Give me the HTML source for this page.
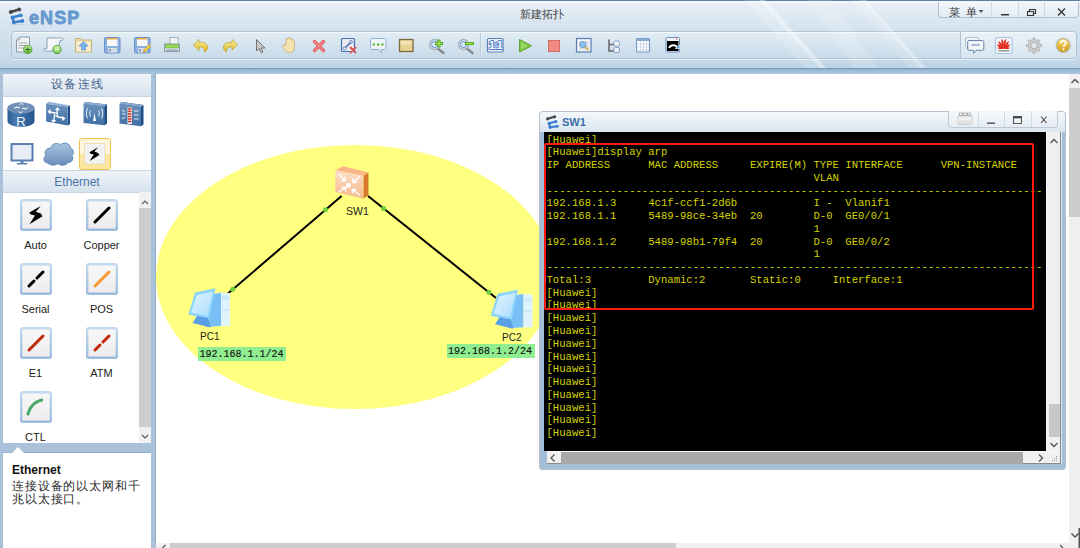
<!DOCTYPE html>
<html><head><meta charset="utf-8">
<style>
*{margin:0;padding:0;box-sizing:border-box}
html,body{width:1080px;height:548px;overflow:hidden;background:#a9c2d9;font-family:"Liberation Sans",sans-serif}
.abs{position:absolute}
#top{left:0;top:0;width:1080px;height:68px;background:linear-gradient(#5e80a6 0,#5e80a6 1.5px,#f2f7fb 1.5px,#e6eff6 4px,#d3e2ee 45%,#c9dbe9 85%,#bcd2e3)}
#band{left:0;top:68px;width:1080px;height:6px;background:linear-gradient(#6b93b8,#8fb1cf 25%,#a3c0d9 50%,#a9c4db)}
#logo{left:29px;top:7.5px;font-weight:bold;font-size:18px;color:#6698d0;-webkit-text-stroke:0.8px #6698d0;letter-spacing:1.1px}
#title{left:520px;top:8px;font-size:10.5px;color:#444;letter-spacing:0px}
#menu{left:938px;top:1.5px;width:141px;height:16.5px;border:1px solid #aec2d4;border-top:none;border-radius:0 0 4px 4px;background:linear-gradient(#f2f7fb,#e2ecf4)}
#tb{left:11px;top:31px;width:950px;height:28px;border:1px solid #b2c2d2;border-radius:4px 0 0 4px;background:linear-gradient(#e2edf5,#d2e2ee 60%,#c9dbe9);box-shadow:inset 0 1px 0 #f4f8fb,0 1px 0 #e4eef5}
#tb2{left:960px;top:31px;width:117px;height:28px;border:1px solid #b2c2d2;border-radius:0 4px 4px 0;background:linear-gradient(#eaf2f8,#d8e6f0);box-shadow:inset 0 1px 0 #f6f9fc,0 1px 0 #e4eef5}
#panel{left:3px;top:74px;width:148px;height:369px;background:#fff}
#ph1{left:0;top:0;width:148px;height:23px;background:linear-gradient(#f0f4f9,#d8e3ee);border-bottom:1px solid #c8d6e3;text-align:center;font-size:11.5px;color:#3f628c;padding-top:3px;letter-spacing:1.5px;padding-left:1px}
#ph2{left:0;top:96px;width:148px;height:23px;background:linear-gradient(#f0f4f9,#d6e2ee);border-bottom:1px solid #c8d6e3;text-align:center;font-size:12px;color:#4a72a8;padding-top:5px}
#psb{left:136px;top:118px;width:12px;height:251px;background:#f0f0f0}
#psbt{left:136px;top:134px;width:12px;height:219px;background:#cdcdcd}
.lbl{position:absolute;width:60px;text-align:center;font-size:11px;color:#222}
#info{left:3px;top:453px;width:148px;height:95px;background:#fff;box-shadow:0 -1px 0 #93afca}
#canvas{left:156px;top:74px;width:913px;height:469px;background:#fff;overflow:hidden;box-shadow:-1px 0 0 #93afca}
#vscroll{left:1069px;top:74px;width:11px;height:469px;background:#f0f0f0}
#vthumb{left:1069px;top:88px;width:11px;height:129px;background:#cdcdcd}
#hscroll{left:156px;top:543px;width:924px;height:5px;background:#f0f0f0}
#hthumb{left:170px;top:543px;width:506px;height:5px;background:#cdcdcd}
.mono{font-family:"Liberation Mono",monospace}
#win{left:539px;top:111px;width:527px;height:359px;border-radius:4px 4px 3px 3px;background:#a3bfd8;border:1px solid #b4c0cc}
#wtitle{left:0;top:0;width:525px;height:20px;background:linear-gradient(#f4f8fb,#dae6f1);border-radius:3px 3px 0 0}
#wbtns{left:408px;top:-1px;width:110px;height:17px;border:1px solid #bccad8;border-top:none;border-radius:0 0 4px 4px;background:linear-gradient(#f6f9fb,#e6edf3)}
#term{left:4px;top:20px;width:502px;height:319px;background:#000;overflow:hidden}
#term pre{position:absolute;left:2.5px;top:1.5px;font-family:"Liberation Mono",monospace;font-size:10.6px;line-height:12.77px;color:#d4d400;white-space:pre}
#tvs{left:506px;top:20px;width:15px;height:332px;background:#f0f0f0;border-left:1px solid #fafafa;border-right:1px solid #858585;box-shadow:1px 0 0 #e4ecf2}
#tvt{left:509px;top:292px;width:11px;height:33px;background:#c8c8c8}
#ths{left:7px;top:339px;width:513px;height:13px;background:#f0f0f0;border-top:1px solid #fafafa;border-bottom:1px solid #8a8a8a}
#tht{left:21px;top:340px;width:462px;height:11.5px;background:#a8a8a8}
#red{left:3.5px;top:30.5px;width:490px;height:167px;border:2.3px solid #ff1a0a;border-radius:2px}
</style></head><body>
<div id="top" class="abs"></div>
<div id="band" class="abs"></div>
<div id="tb" class="abs"></div>
<div id="tb2" class="abs"></div>
<svg class="abs" style="left:0;top:0" width="1080" height="68">
 <defs>
  <linearGradient id="gG" x1="0" y1="0" x2="0" y2="1"><stop offset="0" stop-color="#c4eea0"/><stop offset="1" stop-color="#62b834"/></linearGradient>
  <linearGradient id="gY" x1="0" y1="0" x2="0" y2="1"><stop offset="0" stop-color="#fff3a0"/><stop offset="1" stop-color="#d8b420"/></linearGradient>
  <linearGradient id="gGold" x1="0" y1="0" x2="0" y2="1"><stop offset="0" stop-color="#f8dc70"/><stop offset="1" stop-color="#d09a10"/></linearGradient>
 </defs>
 <!-- streaks -->
 <polygon points="744,0 760,0 821,68 805,68" fill="#fff" opacity="0.16"/>
 <polygon points="759,0 765,0 826,68 820,68" fill="#fff" opacity="0.42"/>
 <polygon points="808,0 832,0 878,68 854,68" fill="#fff" opacity="0.14"/>
 <polygon points="850,0 862,0 922,68 910,68" fill="#fff" opacity="0.14"/>
 <polygon points="861,0 866,0 926,68 921,68" fill="#fff" opacity="0.32"/>
 <!-- logo icon -->
 <g id="lg">
  <path d="M10.8,12 L19,9.5" stroke="#474747" stroke-width="2.6" stroke-linecap="round"/>
  <circle cx="10.8" cy="12" r="2" fill="#474747"/><circle cx="19.2" cy="9.5" r="2" fill="#474747"/>
  <g stroke="#3b7fd0" stroke-width="2.6" stroke-linecap="round" fill="none"><path d="M12.5,17.5 L20.5,15.3 M12.5,17.5 L13.8,22.3 L22.3,21"/></g>
  <circle cx="20.8" cy="15.3" r="1.9" fill="#3b7fd0"/><circle cx="22.3" cy="21" r="1.9" fill="#3b7fd0"/><circle cx="12.5" cy="17.5" r="1.9" fill="#3b7fd0"/><circle cx="13.8" cy="22.3" r="1.9" fill="#3b7fd0"/>
  <rect x="12" y="24" width="13" height="0.8" fill="#9ab4d0" opacity="0.5"/>
 </g>
 <!-- toolbar separator -->
 <line x1="480.5" y1="33" x2="480.5" y2="57" stroke="#bccbd8" stroke-width="1"/>
 <line x1="481.5" y1="33" x2="481.5" y2="57" stroke="#e8f0f6" stroke-width="1"/>
 <!-- 1 new doc -->
 <g>
  <path d="M19.5,37 L29.5,37 L29.5,52 L16.5,52 L16.5,40 Z" fill="#f2f2f2" stroke="#8a9cb0" stroke-width="1"/>
  <path d="M16.5,40 L19.5,40 L19.5,37" fill="#d8d8d8" stroke="#8a9cb0" stroke-width="0.8"/>
  <line x1="18.5" y1="43" x2="27" y2="43" stroke="#9aa8b8"/><line x1="18.5" y1="45.5" x2="27" y2="45.5" stroke="#9aa8b8"/><line x1="18.5" y1="48" x2="24" y2="48" stroke="#9aa8b8"/>
  <circle cx="27.8" cy="49.5" r="4.2" fill="url(#gG)" stroke="#3f8f24" stroke-width="0.7"/>
  <path d="M27.8,47.2 v4.6 M25.5,49.5 h4.6" stroke="#2a6a18" stroke-width="0.9"/>
 </g>
 <!-- 2 scroll -->
 <g>
  <path d="M47,38 L62,38 C63.5,38 63.5,40.5 61.5,40.5 L60,40.5 L58,51 L45,51 C43.5,51 43.5,48.5 45,48.5 L47,48.5Z" fill="#f4f6f8" stroke="#8aa2bc" stroke-width="1"/>
  <circle cx="57" cy="49.5" r="4.2" fill="url(#gG)" stroke="#3f8f24" stroke-width="0.7"/>
  <path d="M54.5,49.5 h5 M54.8,48 h4.4 M54.8,51 h4.4" stroke="#e8ffd8" stroke-width="0.8"/>
 </g>
 <!-- 3 folder -->
 <g>
  <path d="M75.5,38.5 L80.5,38.5 L82,40 L91.5,40 L91.5,52 L75.5,52 Z" fill="#ead9a8" stroke="#c8b070" stroke-width="1"/>
  <rect x="76" y="41.5" width="15" height="10" fill="#f6ecd0"/>
  <path d="M83.5,41.5 L88,46 L85.5,46 L85.5,50 L81.5,50 L81.5,46 L79,46 Z" fill="#78b4f0" stroke="#4a8ad4" stroke-width="0.6"/>
 </g>
 <!-- 4 floppy -->
 <g>
  <rect x="104.5" y="37.5" width="15.5" height="15.5" rx="1.5" fill="#8ab0e0" stroke="#6a90c4" stroke-width="1"/>
  <rect x="107" y="38" width="10.5" height="8" fill="#f8f8f8"/>
  <rect x="107" y="38" width="10.5" height="1.5" fill="#f0b040"/>
  <rect x="108" y="48" width="9" height="4.5" fill="#d8dde4"/>
  <rect x="109" y="49" width="2" height="2.5" fill="#8aa0b8"/>
 </g>
 <!-- 5 floppy pencil -->
 <g>
  <rect x="134.5" y="37.5" width="15.5" height="15.5" rx="1.5" fill="#8ab0e0" stroke="#6a90c4" stroke-width="1"/>
  <rect x="137" y="38" width="10.5" height="8" fill="#f8f8f8"/>
  <rect x="137" y="38" width="10.5" height="1.5" fill="#f0b040"/>
  <rect x="138" y="48" width="9" height="4.5" fill="#d8dde4"/>
  <rect x="139" y="49" width="2" height="2.5" fill="#8aa0b8"/>
  <path d="M143.5,52 L144,49.5 L149.5,44.5 L151,46 L145.5,51.5 Z" fill="#f8d840" stroke="#b89020" stroke-width="0.6"/>
  <path d="M143.5,52 L144,50.5 L145,51.5Z" fill="#c03030"/>
 </g>
 <!-- 6 printer -->
 <g>
  <rect x="170" y="37.5" width="8" height="8" fill="#f4f4f4" stroke="#9aa6b4" stroke-width="0.8"/>
  <path d="M164.5,44 L179.5,44 L179.5,51.5 L164.5,51.5Z" fill="#e4e8ee" stroke="#8a9aae" stroke-width="1"/>
  <rect x="165.5" y="44.5" width="13" height="3.5" fill="#9ad858" stroke="#5aa828" stroke-width="0.5"/>
  <rect x="166" y="49.5" width="12" height="1.2" fill="#8a96a8"/>
 </g>
 <!-- 7 undo -->
 <path d="M193.5,45 L199,39.5 L199,42.5 C204.5,42 208,44 207.5,48 C207,50 206,51.5 204.5,52 C205,49 203.5,46.5 199,47 L199,50.5 Z" fill="url(#gY)" stroke="#c0a020" stroke-width="0.7"/>
 <!-- 8 redo -->
 <path d="M237.5,44.5 L232,39.5 L232,42.5 C226.5,42 223,44 223.5,48 C224,50 225,51.5 226.5,52 C226,49 227.5,46.5 232,47 L232,50 Z" fill="url(#gY)" stroke="#c0a020" stroke-width="0.7"/>
 <!-- 9 cursor -->
 <path d="M256.5,39.5 L256.5,51 L259,48.5 L261.5,53 L263,52 L261,48 L265,48 Z" fill="#c8c8c8" stroke="#6a6a6a" stroke-width="0.9"/>
 <!-- 10 hand -->
 <path d="M284,45 L286,44.5 L286,39.5 C286,38.3 287.8,38.3 287.8,39.5 L288,38.5 C288,37.3 290,37.3 290,38.5 L290.2,39 C290.2,37.8 292.2,37.8 292.2,39 L292.4,40.5 C292.4,39.5 294.4,39.5 294.4,40.5 L294.5,47.5 C294.5,50.5 293,52.5 289.5,52.5 C287,52.5 285.5,51 284.5,49.5 L282.5,46.5 C282,45.5 283,44.8 284,45Z" fill="#f4e2b0" stroke="#c8a878" stroke-width="0.8"/>
 <!-- 11 red X -->
 <path d="M314.5,41.5 L323.5,50.5 M323.5,41.5 L314.5,50.5" stroke="#e05858" stroke-width="3.2" stroke-linecap="round"/>
 <path d="M314.5,41.5 L323.5,50.5 M323.5,41.5 L314.5,50.5" stroke="#f49090" stroke-width="1.4" stroke-linecap="round"/>
 <!-- 12 link delete -->
 <g>
  <rect x="341.5" y="38.5" width="13" height="13" rx="1" fill="#e8eaee" stroke="#4a72b0" stroke-width="1.2"/>
  <line x1="344.5" y1="48.5" x2="351" y2="42" stroke="#3a66a8" stroke-width="1.3"/>
  <circle cx="344.5" cy="48.5" r="1.4" fill="#fff" stroke="#3a66a8" stroke-width="0.8"/>
  <circle cx="351" cy="42" r="1.4" fill="#fff" stroke="#3a66a8" stroke-width="0.8"/>
  <path d="M350.5,47.5 L355.5,52.5 M355.5,47.5 L350.5,52.5" stroke="#e05050" stroke-width="1.8" stroke-linecap="round"/>
 </g>
 <!-- 13 comment -->
 <g>
  <path d="M372,38.5 L384.5,38.5 C385.5,38.5 386,39 386,40 L386,48 C386,49 385.5,49.5 384.5,49.5 L381,49.5 L381.5,53 L378.5,49.5 L372,49.5 C371,49.5 370.5,49 370.5,48 L370.5,40 C370.5,39 371,38.5 372,38.5Z" fill="#eef4fa" stroke="#8fb0d4" stroke-width="1"/>
  <circle cx="373.8" cy="44.5" r="1.2" fill="#5cb830"/><circle cx="378.2" cy="44.5" r="1.2" fill="#5cb830"/><circle cx="382.5" cy="44.5" r="1.2" fill="#5cb830"/>
 </g>
 <!-- 14 rect -->
 <rect x="399.5" y="39.5" width="13.5" height="12" fill="#e8d390" stroke="#7a6a40" stroke-width="1.3"/>
 <rect x="401" y="41" width="10.5" height="3.5" fill="#f2e4b4"/>
 <!-- 15 zoom in -->
 <g>
  <line x1="437" y1="48" x2="443.5" y2="53" stroke="#8a8a8a" stroke-width="2.4" stroke-linecap="round"/>
  <circle cx="434.5" cy="44.5" r="5" fill="#dce8f4" stroke="#a8b0b8" stroke-width="1.3"/>
  <circle cx="434.5" cy="44.5" r="3" fill="none" stroke="#5a8ad0" stroke-width="1"/>
  <path d="M439,39.5 v8 M435,43.5 h8" stroke="#50a820" stroke-width="3"/>
  <path d="M439,40.5 v6 M436,43.5 h6" stroke="#b8e850" stroke-width="1.2"/>
 </g>
 <!-- 16 zoom out -->
 <g>
  <line x1="466" y1="48" x2="472.5" y2="53" stroke="#8a8a8a" stroke-width="2.4" stroke-linecap="round"/>
  <circle cx="463.5" cy="44.5" r="5" fill="#dce8f4" stroke="#a8b0b8" stroke-width="1.3"/>
  <circle cx="463.5" cy="44.5" r="3" fill="none" stroke="#5a8ad0" stroke-width="1"/>
  <path d="M465,43.5 h9" stroke="#50a820" stroke-width="3"/>
  <path d="M466,43.5 h7" stroke="#b8e850" stroke-width="1.2"/>
 </g>
 <!-- 17 1:1 -->
 <g>
  <rect x="487.5" y="38.5" width="15.5" height="13.5" rx="1" fill="#eef0f2" stroke="#5a82b8" stroke-width="1.2"/>
  <text x="495.3" y="49" font-family="Liberation Sans" font-weight="bold" font-size="10.5" fill="#fff" stroke="#4a7cc8" stroke-width="1.8" paint-order="stroke" text-anchor="middle" letter-spacing="-0.8">1:1</text>
 </g>
 <!-- 18 play -->
 <path d="M519.5,39.5 L531.5,45.8 L519.5,52 Z" fill="#7cc640" stroke="#5aa830" stroke-width="1"/>
 <path d="M521,42 L528,45.8 L521,49.5Z" fill="#a8e070" opacity="0.7"/>
 <!-- 19 stop -->
 <rect x="548.5" y="40.5" width="11" height="11" fill="#f08a84" stroke="#d46c60" stroke-width="1"/>
 <!-- 20 search -->
 <g>
  <rect x="576.5" y="38.5" width="14.5" height="13.5" fill="#eef0f4" stroke="#5a7eb0" stroke-width="1.2"/>
  <rect x="578.5" y="40.5" width="10.5" height="9.5" fill="#d8dde4" stroke="#ffffff" stroke-width="0.6"/>
  <line x1="585" y1="47" x2="588.5" y2="50" stroke="#e0a030" stroke-width="1.6"/>
  <circle cx="582.8" cy="44.5" r="3" fill="#8ac4f0" stroke="#5a90c8" stroke-width="0.8"/>
 </g>
 <!-- 21 tree -->
 <g>
  <path d="M609,39.5 L609,51 L614,51 M609,44.5 L614,44.5" stroke="#6a6a6a" stroke-width="1.6" fill="none"/>
  <rect x="614" y="41" width="5.5" height="5" rx="1.5" fill="#f2f4f6" stroke="#7a9ac4" stroke-width="0.9"/>
  <rect x="614" y="47.5" width="5.5" height="5" rx="1.5" fill="#f2f4f6" stroke="#7a9ac4" stroke-width="0.9"/>
 </g>
 <!-- 22 grid -->
 <g>
  <rect x="636.5" y="38.5" width="13" height="13.5" rx="1" fill="#ffffff" stroke="#7a9ac8" stroke-width="1.1"/>
  <rect x="637" y="39" width="12" height="2" fill="#8aa8d0"/>
  <path d="M637,44 h12 M637,47 h12 M637,50 h12 M640.5,41 v11 M643.5,41 v11 M646.5,41 v11" stroke="#b8cce4" stroke-width="0.7"/>
 </g>
 <!-- 23 terminal -->
 <g>
  <rect x="666" y="37.5" width="13.5" height="14.5" rx="1.2" fill="#f4f6f8" stroke="#6a8ab8" stroke-width="1"/>
  <rect x="667" y="41" width="11.5" height="10" fill="#000"/>
  <rect x="676" y="38.5" width="1.5" height="1" fill="#e04040"/>
  <path d="M669,48 C670.5,44.5 675,44.5 677,47" stroke="#fff" stroke-width="1.8" fill="none"/>
  <path d="M675,48.5 L680,48.5 L679,45 Z" fill="#5aa0e0" stroke="#fff" stroke-width="0.6"/>
 </g>
 <!-- right: chat -->
 <g>
  <rect x="965.5" y="37.5" width="13" height="9.5" rx="1.5" fill="#eef2f6" stroke="#aebfd2" stroke-width="0.9"/>
  <path d="M969,40.5 L982.5,40.5 C983.3,40.5 983.8,41 983.8,41.8 L983.8,49 C983.8,49.8 983.3,50.3 982.5,50.3 L976,50.3 L973.8,53.3 L973.5,50.3 L969,50.3 C968.2,50.3 967.7,49.8 967.7,49 L967.7,41.8 C967.7,41 968.2,40.5 969,40.5Z" fill="#f2f5f8" stroke="#6a84a8" stroke-width="1"/>
  <line x1="971.5" y1="45" x2="980" y2="45" stroke="#8aa4c8" stroke-width="1.4"/>
 </g>
 <!-- huawei -->
 <g>
  <rect x="995.5" y="37.5" width="16.5" height="16" rx="1.5" fill="#f2f6fa" stroke="#a6c2de" stroke-width="1.1"/>
  <g fill="#e42a1c">
   <path d="M0,0 C1.50,-3.92 1.25,-8.33 0,-9.80 C-1.25,-8.33 -1.50,-3.92 0,0Z" transform="translate(1003.6,48.6) rotate(11)"/>
   <path d="M0,0 C1.50,-3.92 1.25,-8.33 0,-9.80 C-1.25,-8.33 -1.50,-3.92 0,0Z" transform="translate(1003.6,48.6) rotate(-11)"/>
   <path d="M0,0 C1.50,-3.60 1.25,-7.65 0,-9.00 C-1.25,-7.65 -1.50,-3.60 0,0Z" transform="translate(1003.6,48.6) rotate(35)"/>
   <path d="M0,0 C1.50,-3.60 1.25,-7.65 0,-9.00 C-1.25,-7.65 -1.50,-3.60 0,0Z" transform="translate(1003.6,48.6) rotate(-35)"/>
   <path d="M0,0 C1.44,-3.04 1.20,-6.46 0,-7.60 C-1.20,-6.46 -1.44,-3.04 0,0Z" transform="translate(1003.6,48.6) rotate(59)"/>
   <path d="M0,0 C1.44,-3.04 1.20,-6.46 0,-7.60 C-1.20,-6.46 -1.44,-3.04 0,0Z" transform="translate(1003.6,48.6) rotate(-59)"/>
   <path d="M0,0 C1.32,-2.56 1.10,-5.44 0,-6.40 C-1.10,-5.44 -1.32,-2.56 0,0Z" transform="translate(1003.6,48.6) rotate(83)"/>
   <path d="M0,0 C1.32,-2.56 1.10,-5.44 0,-6.40 C-1.10,-5.44 -1.32,-2.56 0,0Z" transform="translate(1003.6,48.6) rotate(-83)"/>
  </g>
  <rect x="998.3" y="50.2" width="11" height="1.3" fill="#888"/>
 </g>
 <!-- gear -->
 <g>
  <path d="M1039.36,43.38 L1039.69,44.49 L1041.53,44.54 L1041.53,46.66 L1039.69,46.71 L1039.36,47.82 L1038.81,48.84 L1040.07,50.17 L1038.57,51.67 L1037.24,50.41 L1036.22,50.96 L1035.11,51.29 L1035.06,53.13 L1032.94,53.13 L1032.89,51.29 L1031.78,50.96 L1030.76,50.41 L1029.43,51.67 L1027.93,50.17 L1029.19,48.84 L1028.64,47.82 L1028.31,46.71 L1026.47,46.66 L1026.47,44.54 L1028.31,44.49 L1028.64,43.38 L1029.19,42.36 L1027.93,41.03 L1029.43,39.53 L1030.76,40.79 L1031.78,40.24 L1032.89,39.91 L1032.94,38.07 L1035.06,38.07 L1035.11,39.91 L1036.22,40.24 L1037.24,40.79 L1038.57,39.53 L1040.07,41.03 L1038.81,42.36Z" fill="#d2d2d2" stroke="#a4a4a4" stroke-width="0.8"/>
  <circle cx="1034" cy="45.6" r="3.6" fill="none" stroke="#b0b0b0" stroke-width="1.2"/>
  <circle cx="1034" cy="45.6" r="2.4" fill="#dfe8f0"/>
 </g>
 <!-- help -->
 <g>
  <circle cx="1063.2" cy="45.4" r="7" fill="url(#gGold)" stroke="#b8b8b0" stroke-width="1.2"/>
  <path d="M1060.8,43.5 C1060.8,41.5 1062,40.8 1063.3,40.8 C1064.8,40.8 1065.8,41.8 1065.8,43 C1065.8,44.8 1063.5,45 1063.5,47" stroke="#fff" stroke-width="1.7" fill="none"/>
  <circle cx="1063.5" cy="49.3" r="1" fill="#fff"/>
 </g>
</svg>

<div id="logo" class="abs">eNSP</div>
<div id="title" class="abs">新建拓扑</div>
<div id="menu" class="abs">
 <div class="abs" style="left:52px;top:0;width:1px;height:17px;background:#cfd9e2"></div>
 <div class="abs" style="left:79px;top:0;width:1px;height:17px;background:#cfd9e2"></div>
 <div class="abs" style="left:105px;top:0;width:1px;height:17px;background:#cfd9e2"></div>
 <div class="abs" style="left:10px;top:3px;font-size:11px;color:#333;letter-spacing:6px;white-space:nowrap">菜单</div>
 <svg class="abs" style="left:0;top:0" width="141" height="18">
  <path d="M39.5,8 h5 l-2.5,3z" fill="#555"/>
  <rect x="62" y="12" width="8" height="1.5" fill="#333"/>
  <rect x="88.5" y="9.5" width="6" height="4" fill="none" stroke="#333" stroke-width="1.1"/>
  <path d="M90.5,9.5 v-2 h6 v4 h-2" fill="none" stroke="#333" stroke-width="1.1"/>
  <path d="M119,6.5 l7,7 M126,6.5 l-7,7" stroke="#333" stroke-width="1.3"/>
 </svg>
</div>

<div id="panel" class="abs">
  <div id="ph1" class="abs">设备连线</div>
  <div id="ph2" class="abs">Ethernet</div>
  <div id="psb" class="abs"></div>
  <div id="psbt" class="abs"></div>
  <div class="lbl" style="left:2.5px;top:165px">Auto</div>
  <div class="lbl" style="left:68.5px;top:165px">Copper</div>
  <div class="lbl" style="left:2.5px;top:229px">Serial</div>
  <div class="lbl" style="left:68.5px;top:229px">POS</div>
  <div class="lbl" style="left:2.5px;top:293px">E1</div>
  <div class="lbl" style="left:68.5px;top:293px">ATM</div>
  <div class="lbl" style="left:2.5px;top:357px">CTL</div>
</div>
<div id="info" class="abs">
  <div class="abs" style="left:9px;top:10px;font-weight:bold;font-size:12px;color:#111">Ethernet</div>
  <div class="abs" style="left:9px;top:27px;width:140px;font-size:11.5px;line-height:13px;color:#2a2a2a;letter-spacing:0.85px">连接设备的以太网和千兆以太接口。</div>
</div>
<svg class="abs" style="left:0;top:0" width="156" height="548">
 <defs>
  <linearGradient id="rb" x1="0" y1="0" x2="1" y2="0"><stop offset="0" stop-color="#2a5a92"/><stop offset="0.3" stop-color="#4a7ab0"/><stop offset="0.6" stop-color="#3a6aa2"/><stop offset="1" stop-color="#24548c"/></linearGradient>
  <linearGradient id="sf" x1="0" y1="0" x2="0" y2="1"><stop offset="0" stop-color="#6a92bc"/><stop offset="1" stop-color="#3e6ea4"/></linearGradient>
  <linearGradient id="cl" x1="0" y1="0" x2="0" y2="1"><stop offset="0" stop-color="#a8c4e0"/><stop offset="1" stop-color="#6a8cb8"/></linearGradient>
  <linearGradient id="bb" x1="0" y1="0" x2="0" y2="1"><stop offset="0" stop-color="#c4daf0"/><stop offset="1" stop-color="#9cbde0"/></linearGradient>
  <linearGradient id="bi" x1="0" y1="0" x2="0" y2="1"><stop offset="0" stop-color="#f8f8f8"/><stop offset="1" stop-color="#ececec"/></linearGradient>
  <g id="bolt"><path d="M20.8,6.9 L9.3,13.6 L10.6,15.6 L15,16.5 L9.5,25.3 L22.5,17.3 L20.7,14.6 L15.8,12.8 Z" fill="#000"/></g>
  <g id="btn"><rect x="1.2" y="1.2" width="29.6" height="29.6" rx="1.5" fill="url(#bi)" stroke="url(#bb)" stroke-width="2.4"/></g>
 </defs>
 <!-- router -->
 <g>
  <path d="M7.5,108 L7.5,121 C7.5,124.5 13.5,126.8 21,126.8 C28.5,126.8 34.5,124.5 34.5,121 L34.5,108Z" fill="url(#rb)"/>
  <ellipse cx="21" cy="108" rx="13.5" ry="5.8" fill="#6e8fb6"/>
  <path d="M14,108.5 l3,-2 l0,1.2 l3,0 M28,107.5 l-3,2 l0,-1.2 l-3,0 M19.5,104.8 l2,-1.5 l2,1.5 M22.5,111.5 l-2,1.5 l-2,-1.5" stroke="#fff" stroke-width="1" fill="none"/>
  <text x="21" y="125.8" text-anchor="middle" font-family="Liberation Sans" font-size="13" fill="#f4f8fc">R</text>
 </g>
 <!-- switch -->
 <g>
  <path d="M46.1,103.8 L48.5,101.8 L70,105.6 L67.7,106.8 Z" fill="#8fb0d4"/>
  <path d="M67.7,106.8 L70,105.6 L70,124.3 L67.7,125.5 Z" fill="#1c4c8a"/>
  <path d="M46.1,103.8 L67.7,106.8 L67.7,125.5 L46.1,121.4 Z" fill="url(#sf)"/>
  <g stroke="#fff" stroke-width="1.3" fill="none" stroke-linecap="round">
   <path d="M54.5,112.8 L48.5,111.5 M50.3,110 L48.5,111.5 L50,113.3"/>
   <path d="M57,113.5 L57.5,108 M56,109.7 L57.5,108 L59,109.8"/>
   <path d="M57,116.5 L64.5,118.5 M62.8,117 L64.5,118.5 L62.6,120"/>
   <path d="M54.5,116 L53.5,122 M52,120.3 L53.5,122 L55.2,120.6"/>
   <rect x="54.3" y="113" width="3" height="3" stroke-width="1"/>
  </g>
 </g>
 <!-- wlan -->
 <g>
  <path d="M83.5,104 L85.5,102 L107,104.5 L107,123.5 L104.5,125.3 Z" fill="#1e4e88"/>
  <path d="M83.5,104 L104.5,106.5 L104.5,125.3 L83.5,123Z" fill="url(#sf)"/>
  <path d="M83.5,104 L85.5,102 L107,104.5 L104.5,106.5Z" fill="#8aaad0"/>
  <path d="M93,121 L94.5,113 L96,121Z" fill="#fff"/>
  <path d="M90.5,110.5 C89.5,112.5 89.5,114.5 90.5,116.5 M98.5,110.5 C99.5,112.5 99.5,114.5 98.5,116.5 M87.5,108.5 C86,111.5 86,115.5 87.5,118.5 M101.5,108.5 C103,111.5 103,115.5 101.5,118.5" stroke="#fff" stroke-width="0.9" fill="none"/>
 </g>
 <!-- firewall -->
 <g>
  <path d="M119.5,104 L121.5,102 L143.5,105 L143.5,124.5 L141,126.3 Z" fill="#1e4e88"/>
  <path d="M119.5,104 L141,107 L141,126.3 L119.5,123.5Z" fill="url(#sf)"/>
  <path d="M119.5,104 L121.5,102 L143.5,105 L141,107Z" fill="#8aaad0"/>
  <rect x="127.5" y="107.5" width="4.5" height="16.5" fill="#f4f0e8"/>
  <path d="M128,109 h3.5 M128,111.5 h3.5 M128,114 h3.5 M128,116.5 h3.5 M128,119 h3.5 M128,121.5 h3.5" stroke="#d03020" stroke-width="1.4"/>
  <path d="M122,110 l3,2 M122,114 h3.5 M122,119 l3,-2 M134,111 h4.5 M134,115 h4.5 M134,119 h4.5" stroke="#fff" stroke-width="0.9"/>
 </g>
 <!-- monitor -->
 <g>
  <rect x="11.5" y="144" width="21" height="16.5" fill="#e6edf7" stroke="#5a80b2" stroke-width="2"/>
  <path d="M32.5,143.5 L33,143 L33,161 L32.5,160.5" fill="#4a70a0"/>
  <rect x="20.5" y="160.5" width="3" height="3" fill="#5a80b0"/>
  <rect x="16.5" y="163" width="11" height="1.6" rx="0.8" fill="#5a80b0"/>
 </g>
 <!-- cloud -->
 <path d="M48,163 C43,163 43,157 46,155.5 C43.5,152 46.5,147.5 50.5,148.5 C51.5,143.5 57.5,142 60.5,145 C63.5,141.5 70,143 70.5,148 C74,149 74,154 72,155.5 C74,158.5 72,163 68,162.5 C66,166 60,166 58,163.5 C55,166 50,165.5 48,163Z" fill="url(#cl)" stroke="#5a84b4" stroke-width="0.9"/>
 <!-- selected -->
 <g>
  <rect x="79.5" y="138.5" width="31" height="31" rx="2" fill="#fff6dc" stroke="#f0c050" stroke-width="1"/>
  <rect x="80" y="154" width="30" height="15" fill="#fde7a0"/>
  <rect x="84.5" y="143.5" width="20.5" height="20.5" fill="#f2f2f2" stroke="#e8d6a8" stroke-width="0.8"/>
  <g transform="translate(82.5,142) scale(0.75)"><use href="#bolt"/></g>
 </g>
 <line x1="3" y1="170.5" x2="151" y2="170.5" stroke="#c9d6e2"/>
 <!-- buttons -->
 <g transform="translate(20,199)"><use href="#btn"/><use href="#bolt"/></g>
 <g transform="translate(86,199)"><use href="#btn"/><line x1="9" y1="23" x2="23" y2="9" stroke="#000" stroke-width="3" stroke-linecap="round"/></g>
 <g transform="translate(20,263)"><use href="#btn"/><path d="M9,23 L14,18 M17,15 L23,9" stroke="#000" stroke-width="3" stroke-linecap="round"/></g>
 <g transform="translate(86,263)"><use href="#btn"/><line x1="9" y1="23" x2="23" y2="9" stroke="#f59a30" stroke-width="3" stroke-linecap="round"/></g>
 <g transform="translate(20,327)"><use href="#btn"/><line x1="9" y1="23" x2="23" y2="9" stroke="#c02a0a" stroke-width="3" stroke-linecap="round"/></g>
 <g transform="translate(86,327)"><use href="#btn"/><path d="M9,23 L14,18 M17,15 L23,9" stroke="#c02a0a" stroke-width="3" stroke-linecap="round"/></g>
 <g transform="translate(20,391)"><use href="#btn"/><path d="M8,23 C10,16 14,11 22,9" stroke="#3a9a5a" stroke-width="3" stroke-linecap="round" fill="none" stroke-dasharray="0.1 1.6"/><path d="M8,23 C10,16 14,11 22,9" stroke="#4aaa6a" stroke-width="2.2" fill="none"/></g>
 <!-- scrollbar arrows -->
 <path d="M142,204 l3,-3 l3,3" stroke="#555" stroke-width="1.1" fill="none"/>
 <path d="M142,435 l3,3 l3,-3" stroke="#555" stroke-width="1.1" fill="none"/>
 <!-- info pointer -->
 <path d="M12,453 L18,447 L24,453Z" fill="#fff"/>
</svg>


<div id="canvas" class="abs">
  <svg width="913" height="469" style="position:absolute;left:0;top:0">
    <defs>
     <linearGradient id="swf" x1="0" y1="0" x2="0" y2="1"><stop offset="0" stop-color="#fce0c8"/><stop offset="1" stop-color="#f6b88a"/></linearGradient>
     <linearGradient id="pcs" x1="0" y1="0" x2="1" y2="1"><stop offset="0" stop-color="#e4f6ff"/><stop offset="1" stop-color="#a8dcff"/></linearGradient>
    </defs>
    <ellipse cx="199" cy="203" rx="199" ry="132" fill="#ffff80"/>
    <line x1="185.6" y1="122" x2="72" y2="219.5" stroke="#000" stroke-width="2"/>
    <line x1="212" y1="122" x2="340" y2="224" stroke="#000" stroke-width="2"/>
    <circle cx="169.5" cy="135.8" r="2.5" fill="#6cd23c"/>
    <circle cx="227.6" cy="134.4" r="2.5" fill="#6cd23c"/>
    <circle cx="76.8" cy="215.3" r="2.5" fill="#6cd23c"/>
    <circle cx="332.9" cy="218.2" r="2.5" fill="#6cd23c"/>
    <!-- switch -->
    <g>
     <path d="M179.3,96.3 L187,92.3 L212.5,98.5 L207.4,102Z" fill="#f9b48a"/>
     <path d="M207.4,102 L212.5,98.5 L212.5,121 L207.4,124.8Z" fill="#d8782a"/>
     <path d="M179.3,96.3 L207.4,102 L207.4,124.8 L179.3,118Z" fill="url(#swf)"/>
     <g stroke="#fff" stroke-width="1.5" fill="none" stroke-linecap="round">
      <path d="M183.5,100.5 L189,107 M189,103.5 v3.5 h-3.5"/>
      <path d="M203.5,103 L197,108.5 M197,105 v3.5 h3.5"/>
      <path d="M183.5,117.5 L189.5,113.5 M186,113.5 h3.5 v3.5"/>
      <path d="M203.5,121 L196.5,115.5 M196.5,119 v-3.5 h3.5"/>
     </g>
     <circle cx="192.4" cy="111.4" r="2.4" fill="#fff"/>
    </g>
    <g id="pc1">
     <path d="M50,222 L65,218.5 L65,252 L50,253Z" fill="#78bff5"/>
     <path d="M50,222 L56,219 L74,219.5 L65,218.5Z" fill="#c8ecff"/>
     <rect x="65" y="219" width="9" height="33" fill="#dff3ff"/>
     <path d="M66,223 h7 M66,225 h7 M66,236 h7" stroke="#b0dcf8" stroke-width="0.8"/>
     <path d="M39,218.5 L59.5,214.3 L53,245 L32.3,240.5Z" fill="#8ed4fa"/>
     <path d="M41,221 L57,217.5 L51.5,242 L35,238.5Z" fill="url(#pcs)"/>
     <path d="M41,242 L52,244 L54.8,253.5 L36.5,249Z" fill="#5a9ee8"/>
    </g>
    <use href="#pc1" transform="translate(302.5,1.3)"/>
</svg>
  <div class="abs" style="left:190px;top:131px;font-size:10.5px;color:#222">SW1</div>
  <div class="abs" style="left:44px;top:257px;font-size:10px;color:#222">PC1</div>
  <div class="abs" style="left:346px;top:258px;font-size:10px;color:#222">PC2</div>
  <div class="abs mono" style="left:42px;top:272.5px;width:88px;height:14px;background:#90ee90;font-size:10px;font-weight:normal;-webkit-text-stroke:0.15px #111;line-height:15px;padding-left:1.5px;color:#111">192.168.1.1/24</div>
  <div class="abs mono" style="left:290.5px;top:270px;width:88.5px;height:14px;background:#90ee90;font-size:10px;font-weight:normal;-webkit-text-stroke:0.15px #111;line-height:15.5px;padding-left:1.5px;color:#111">192.168.1.2/24</div>

</div>
<div id="vscroll" class="abs"></div>
<div id="vthumb" class="abs"></div>
<div id="hscroll" class="abs"></div>
<div id="hthumb" class="abs"></div>
<svg class="abs" style="left:156px;top:543px" width="20" height="5"><path d="M6.5,5 l3,-3" stroke="#555" stroke-width="1.3"/></svg>
<svg class="abs" style="left:1060px;top:74px" width="20" height="474">
 <path d="M11.5,9 l3.5,-3.5 l3.5,3.5" stroke="#555" stroke-width="1.5" fill="none"/>
 <path d="M11.5,459.5 l3.5,3.5 l3.5,-3.5" stroke="#555" stroke-width="1.5" fill="none"/>
 <rect x="18.5" y="454" width="1.5" height="20" fill="#555"/>
 <path d="M0,471 l3,3" stroke="#555" stroke-width="1.3"/>
</svg>

<div id="win" class="abs">
  <div id="wtitle" class="abs"></div>
  <svg class="abs" style="left:0;top:0" width="60" height="20">
   <g transform="translate(-1.2,-3) scale(0.82)">
    <path d="M10.8,12 L19,9.5" stroke="#474747" stroke-width="2.6" stroke-linecap="round"/>
    <circle cx="10.8" cy="12" r="2" fill="#474747"/><circle cx="19.2" cy="9.5" r="2" fill="#474747"/>
    <g stroke="#3b7fd0" stroke-width="2.6" stroke-linecap="round" fill="none"><path d="M12.5,17.5 L20.5,15.3 M12.5,17.5 L13.8,22.3 L22.3,21"/></g>
    <circle cx="20.8" cy="15.3" r="1.9" fill="#3b7fd0"/><circle cx="22.3" cy="21" r="1.9" fill="#3b7fd0"/><circle cx="12.5" cy="17.5" r="1.9" fill="#3b7fd0"/><circle cx="13.8" cy="22.3" r="1.9" fill="#3b7fd0"/>
   </g>
  </svg>
  <div class="abs" style="left:22px;top:4px;font-weight:bold;font-size:11px;color:#3b6ea8">SW1</div>
  <div id="wbtns" class="abs">
   <div class="abs" style="left:29px;top:0;width:1px;height:16px;background:#cfd9e2"></div>
   <div class="abs" style="left:55px;top:0;width:1px;height:16px;background:#cfd9e2"></div>
   <div class="abs" style="left:82px;top:0;width:1px;height:16px;background:#cfd9e2"></div>
   <svg class="abs" style="left:0;top:0" width="110" height="17">
    <rect x="9" y="5" width="14" height="8.5" rx="0.8" fill="#f0f0f0" stroke="#c4c4c4" stroke-width="0.8"/>
    <rect x="9.5" y="9.5" width="13" height="3.5" fill="#e2e2e2"/>
    <g fill="none" stroke="#9a9a9a" stroke-width="0.7"><rect x="10.5" y="2" width="3" height="2.6"/><rect x="14.5" y="2" width="3" height="2.6"/><rect x="18.5" y="2" width="3" height="2.6"/></g>
    <rect x="38" y="11.5" width="8" height="1.3" fill="#444"/>
    <rect x="64.5" y="5.5" width="8" height="7" fill="none" stroke="#444" stroke-width="0.9"/>
    <rect x="64.5" y="5.5" width="8" height="1.8" fill="#444"/>
    <path d="M92,5.5 l5.5,6.5 M97.5,5.5 l-5.5,6.5" stroke="#444" stroke-width="1.1"/>
   </svg>
  </div>
  <div id="term" class="abs"><pre>[Huawei]
[Huawei]display arp
IP ADDRESS      MAC ADDRESS     EXPIRE(M) TYPE INTERFACE      VPN-INSTANCE
                                          VLAN
------------------------------------------------------------------------------
192.168.1.3     4c1f-ccf1-2d6b            I -  Vlanif1
192.168.1.1     5489-98ce-34eb  20        D-0  GE0/0/1
                                          1
192.168.1.2     5489-98b1-79f4  20        D-0  GE0/0/2
                                          1
------------------------------------------------------------------------------
Total:3         Dynamic:2       Static:0     Interface:1
[Huawei]
[Huawei]
[Huawei]
[Huawei]
[Huawei]
[Huawei]
[Huawei]
[Huawei]
[Huawei]
[Huawei]
[Huawei]
[Huawei]</pre>
  </div>
  <div id="red" class="abs"></div>
  <div id="tvs" class="abs"></div>
  <div id="tvt" class="abs"></div>
  <div id="ths" class="abs"></div>
  <div id="tht" class="abs"></div>
  <svg class="abs" style="left:0;top:0" width="527" height="359">
   <path d="M510.5,31 l3.5,-3.5 l3.5,3.5" stroke="#555" stroke-width="1.3" fill="none"/>
   <path d="M510.5,331 l3.5,3.5 l3.5,-3.5" stroke="#555" stroke-width="1.3" fill="none"/>
   <path d="M14.5,342.5 l-3.5,3.5 l3.5,3.5" stroke="#555" stroke-width="1.3" fill="none"/>
   <path d="M499,342.5 l3.5,3.5 l-3.5,3.5" stroke="#555" stroke-width="1.3" fill="none"/>
   <g fill="#999"><rect x="516" y="344" width="1" height="1"/><rect x="514" y="346" width="1" height="1"/><rect x="516" y="346" width="1" height="1"/><rect x="512" y="348" width="1" height="1"/><rect x="514" y="348" width="1" height="1"/><rect x="516" y="348" width="1" height="1"/></g>
  </svg>
</div>
</body></html>
